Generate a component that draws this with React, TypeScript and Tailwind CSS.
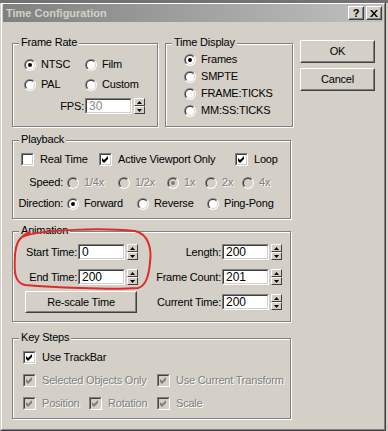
import React from 'react';

type RP = { checked?: boolean; disabled?: boolean };

const Radio = ({ checked = false, disabled = false }: RP) => (
  <span className="relative block w-[12px] h-[12px] shrink-0 rounded-full bg-[linear-gradient(135deg,#808080_50%,#ffffff_50%)]">
    <span className="absolute left-[1px] top-[1px] w-[10px] h-[10px] rounded-full bg-[linear-gradient(135deg,#404040_50%,#d4d0c8_50%)]" />
    <span className={`absolute left-[2px] top-[2px] w-[8px] h-[8px] rounded-full ${disabled ? 'bg-[#d4d0c8]' : 'bg-white'}`} />
    {checked && (
      <span className={`absolute left-[4px] top-[4px] w-[4px] h-[4px] rounded-full ${disabled ? 'bg-[#808080]' : 'bg-black'}`} />
    )}
  </span>
);

const Check = ({ checked = false, disabled = false }: RP) => (
  <span className="block w-[13px] h-[13px] shrink-0 border border-t-[#808080] border-l-[#808080] border-b-white border-r-white">
    <span
      className={`flex w-full h-full items-center justify-center border border-t-[#404040] border-l-[#404040] border-b-[#d4d0c8] border-r-[#d4d0c8] ${disabled ? 'bg-[#d4d0c8]' : 'bg-white'}`}
    >
      {checked && (
        <svg width="7" height="7" viewBox="0 0 7 7">
          <path d="M0 2L2 4L6 0V3L2 7L0 5Z" fill={disabled ? '#808080' : '#000000'} />
        </svg>
      )}
    </span>
  </span>
);

const dis = 'text-[#808080] [text-shadow:1px_1px_0_#ffffff]';

const RadioItem = ({ label, checked, disabled, className = '' }: RP & { label: string; className?: string }) => (
  <div className={`flex items-center gap-[5px] h-[13px] ${className}`}>
    <Radio checked={checked} disabled={disabled} />
    <span className={`whitespace-nowrap ${disabled ? dis : ''}`}>{label}</span>
  </div>
);

const CheckItem = ({
  label,
  checked,
  disabled,
  className = '',
}: RP & { label: string; className?: string }) => (
  <div className={`flex items-center h-[13px] ${className}`}>
    <Check checked={checked} disabled={disabled} />
    <span className={`ml-[6px] whitespace-nowrap ${disabled ? dis : ''}`}>{label}</span>
  </div>
);

const Group = ({ title, className = '', children }: { title: string; className?: string; children?: React.ReactNode }) => (
  <div className={`relative border border-[#808080] shadow-[inset_1px_1px_0_#ffffff,1px_1px_0_#ffffff] ${className}`}>
    <span className="absolute left-[6px] top-[-8px] bg-[#d4d0c8] px-[2px] leading-[13px] whitespace-nowrap">{title}</span>
    {children}
  </div>
);

const Btn = ({ children, className = '' }: { children?: React.ReactNode; className?: string }) => (
  <div className={`border border-t-white border-l-white border-b-[#404040] border-r-[#404040] ${className}`}>
    <div className="w-full h-full border border-t-[#d4d0c8] border-l-[#d4d0c8] border-b-[#808080] border-r-[#808080] flex items-center justify-center">
      {children}
    </div>
  </div>
);

const Edit = ({ value, disabled = false }: { value: string; disabled?: boolean }) => (
  <div className="w-[47px] h-[16px] shrink-0 border border-t-[#808080] border-l-[#808080] border-b-white border-r-white">
    <div
      className={`w-full h-full border border-t-[#404040] border-l-[#404040] border-b-[#d4d0c8] border-r-[#d4d0c8] bg-white pl-[2px] flex items-center text-[12px] leading-[12px] tracking-normal ${disabled ? 'text-[#8a8a8a]' : 'text-black'}`}
    >
      {value}
    </div>
  </div>
);

const Spinner = ({ className = '' }: { className?: string }) => (
  <div className={`flex flex-col w-[11px] h-[16px] shrink-0 ${className}`}>
    <div className="h-[8px] border border-t-white border-l-white border-b-[#404040] border-r-[#404040] bg-[#d4d0c8] flex items-center justify-center">
      <svg width="5" height="3" viewBox="0 0 5 3">
        <path d="M2.5 0L5 3H0Z" fill="#000000" />
      </svg>
    </div>
    <div className="h-[8px] border border-t-white border-l-white border-b-[#404040] border-r-[#404040] bg-[#d4d0c8] flex items-center justify-center">
      <svg width="5" height="3" viewBox="0 0 5 3">
        <path d="M0 0H5L2.5 3Z" fill="#000000" />
      </svg>
    </div>
  </div>
);

const SpinRow = ({ label, value, labelW }: { label: string; value: string; labelW: string }) => (
  <div className="flex items-center h-[16px]">
    <span className={`${labelW} flex justify-end mr-[1px] whitespace-nowrap`}>{label}</span>
    <Edit value={value} />
    <Spinner className="ml-[2px]" />
  </div>
);

const CapBtn = ({ children, className = '' }: { children?: React.ReactNode; className?: string }) => (
  <div className={`w-[16px] h-[14px] bg-[#d4d0c8] border border-t-white border-l-white border-b-[#404040] border-r-[#404040] ${className}`}>
    <div className="w-full h-full border border-t-[#d4d0c8] border-l-[#d4d0c8] border-b-[#808080] border-r-[#808080] flex items-center justify-center">
      {children}
    </div>
  </div>
);

export default function App() {
  return (
    <div className="relative w-[388px] h-[431px] bg-[#d4d0c8] overflow-hidden font-['Liberation_Sans',Arial,sans-serif] text-[11px] leading-[13px] tracking-[-0.2px] text-black select-none">
      <div className="h-[3px] bg-[#727272]" />
      <div className="w-[386px] h-[428px] border-l border-l-[#d4d0c8] border-r border-r-[#404040] border-b border-b-[#404040]">
        <div className="h-full border-t border-l border-t-white border-l-white border-r border-b border-r-[#808080] border-b-[#808080] px-[1px] pb-[1px]">
          {/* Title bar */}
          <div className="h-[18px] flex items-center bg-[linear-gradient(90deg,#808080,#c0c0c0)] pl-[3px] pr-[1px]">
            <span className="flex-1 font-bold text-[#d4d0c8] whitespace-nowrap tracking-normal">Time Configuration</span>
            <CapBtn>
              <span className="font-bold text-[11px] leading-[11px] text-black">?</span>
            </CapBtn>
            <CapBtn className="ml-[2px]">
              <svg width="8" height="7" viewBox="0 0 8 7">
                <path d="M0 0H2L4 2.5L6 0H8L5 3.5L8 7H6L4 4.5L2 7H0L3 3.5Z" fill="#000000" />
              </svg>
            </CapBtn>
          </div>

          {/* Body */}
          <div className="pl-[9px]">
            <div className="mt-[18px] flex items-start">
              <div className="mt-[3px] flex">
                <Group title="Frame Rate" className="w-[146px] h-[84px]">
                  <div className="pl-[11px] pt-[14px]">
                    <div className="grid grid-cols-[61px_auto] gap-y-[7px]">
                      <RadioItem checked label="NTSC" />
                      <RadioItem label="Film" />
                      <RadioItem label="PAL" />
                      <RadioItem label="Custom" />
                    </div>
                    <div className="mt-[7px] flex items-center h-[16px]">
                      <span className="w-[60px] mr-[1px] text-right">FPS:</span>
                      <Edit value="30" disabled />
                      <Spinner className="ml-[2px]" />
                    </div>
                  </div>
                </Group>
                <Group title="Time Display" className="ml-[7px] w-[128px] h-[84px]">
                  <div className="pl-[18px] pt-[9px] flex flex-col gap-[4px]">
                    <RadioItem checked label="Frames" />
                    <RadioItem label="SMPTE" />
                    <RadioItem label="FRAME:TICKS" />
                    <RadioItem label="MM:SS:TICKS" />
                  </div>
                </Group>
              </div>
              <div className="ml-[7px] flex flex-col gap-[5px]">
                <Btn className="w-[75px] h-[23px]">OK</Btn>
                <Btn className="w-[75px] h-[23px]">Cancel</Btn>
              </div>
            </div>

            {/* Playback */}
            <Group title="Playback" className="mt-[13px] w-[279px] h-[79px]">
              <div className="pt-[12px]">
                <div className="flex items-center h-[13px] pl-[8px]">
                  <CheckItem label="Real Time" className="w-[78px]" />
                  <CheckItem checked label="Active Viewport Only" className="w-[136px]" />
                  <CheckItem checked label="Loop" />
                </div>
                <div className="mt-[10px] flex items-center h-[13px] pl-[3px]">
                  <span className="w-[47px] text-right">Speed:</span>
                  <div className="ml-[4px] flex items-center">
                    <RadioItem disabled label="1/4x" className="w-[51px]" />
                    <RadioItem disabled label="1/2x" className="w-[49px]" />
                    <RadioItem disabled checked label="1x" className="w-[38px]" />
                    <RadioItem disabled label="2x" className="w-[37px]" />
                    <RadioItem disabled label="4x" />
                  </div>
                </div>
                <div className="mt-[8px] flex items-center h-[13px] pl-[3px]">
                  <span className="w-[47px] text-right">Direction:</span>
                  <div className="ml-[4px] flex items-center">
                    <RadioItem checked label="Forward" className="w-[70px]" />
                    <RadioItem label="Reverse" className="w-[70px]" />
                    <RadioItem label="Ping-Pong" />
                  </div>
                </div>
              </div>
            </Group>

            {/* Animation */}
            <Group title="Animation" className="mt-[12px] w-[279px] h-[91px]">
              <div className="pt-[12px] pl-[12px] flex">
                <div className="flex flex-col gap-[9px] w-[113px]">
                  <SpinRow label="Start Time:" value="0" labelW="w-[52px]" />
                  <SpinRow label="End Time:" value="200" labelW="w-[52px]" />
                  <div className="h-[16px] flex items-center">
                    <Btn className="w-[112px] h-[22px] shrink-0">Re-scale Time</Btn>
                  </div>
                </div>
                <div className="ml-[19px] flex flex-col gap-[9px]">
                  <SpinRow label="Length:" value="200" labelW="w-[64px]" />
                  <SpinRow label="Frame Count:" value="201" labelW="w-[64px]" />
                  <SpinRow label="Current Time:" value="200" labelW="w-[64px]" />
                </div>
              </div>
            </Group>

            {/* Key Steps */}
            <Group title="Key Steps" className="mt-[16px] w-[279px] h-[81px]">
              <div className="pt-[12px] pl-[10px] flex flex-col gap-[10px]">
                <div className="flex">
                  <CheckItem checked label="Use TrackBar" />
                </div>
                <div className="flex">
                  <CheckItem disabled checked label="Selected Objects Only" className="w-[134px]" />
                  <CheckItem disabled checked label="Use Current Transform" />
                </div>
                <div className="flex">
                  <CheckItem disabled checked label="Position" className="w-[66px]" />
                  <CheckItem disabled checked label="Rotation" className="w-[68px]" />
                  <CheckItem disabled checked label="Scale" />
                </div>
              </div>
            </Group>
          </div>
        </div>
      </div>

      {/* Hand-drawn red annotation */}
      <svg className="absolute left-0 top-0 pointer-events-none" width="388" height="431" viewBox="0 0 388 431">
        <path
          d="M22 237 C40 229 105 228 135 231 C148 234 152 248 150 262 C149 276 146 286 138 288 C110 290 50 287 25 285 C14 283 14 270 15 255 C16 244 18 237 30 232"
          fill="none"
          stroke="#e02a2a"
          strokeWidth="2"
          strokeLinecap="round"
        />
      </svg>
    </div>
  );
}
